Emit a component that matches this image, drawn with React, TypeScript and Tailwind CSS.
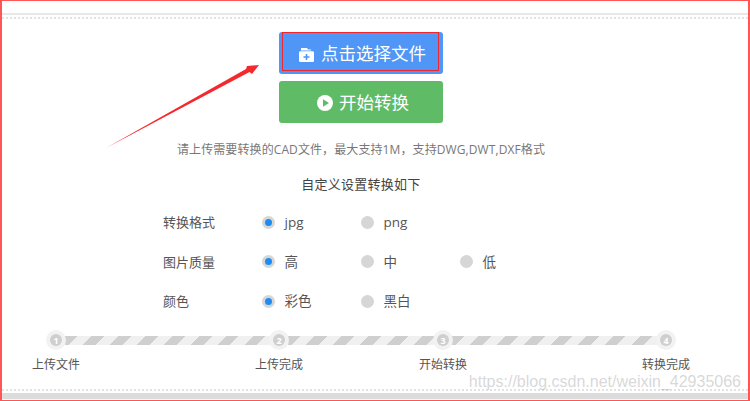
const font = "font-['Open_Sans','Noto_Sans_CJK_SC',sans-serif]"

type Option = { label: string; checked?: boolean }

const rows: { title: string; options: Option[] }[] = [
  { title: "转换格式", options: [{ label: "jpg", checked: true }, { label: "png" }] },
  { title: "图片质量", options: [{ label: "高", checked: true }, { label: "中" }, { label: "低" }] },
  { title: "颜色", options: [{ label: "彩色", checked: true }, { label: "黑白" }] },
]

function Radio({ label, checked }: Option) {
  return (
    <div className="flex w-[99px] items-center">
      <span className="flex h-[13px] w-[13px] items-center justify-center rounded-full bg-[#d6d6d6]">
        {checked && <span className="h-[7px] w-[7px] rounded-full bg-[#1e8cf0]" />}
      </span>
      <span className="ml-[9.5px] text-[13.5px] leading-5 text-[#555]">{label}</span>
    </div>
  )
}

function Step({ n, label }: { n: number; label: string }) {
  return (
    <div className="relative z-10 flex w-16 flex-col items-center">
      <span className="flex h-[20px] w-[20px] items-center justify-center rounded-full bg-[#f2f2f2]">
        <span className="flex h-[12px] w-[12px] items-center justify-center rounded-full bg-[#cfcfcf] text-[9px] font-bold leading-none text-white">
          {n}
        </span>
      </span>
      <span className="mt-[5px] whitespace-nowrap text-[12px] leading-5 text-[#555]">{label}</span>
    </div>
  )
}

function Track({ width }: { width: string }) {
  return (
    <div
      className={`${width} mx-[-23px] mt-[6px] h-[9px] shrink-0 bg-[repeating-linear-gradient(135deg,#cfcfcf_0,#cfcfcf_9px,#f0f0f0_9px,#f0f0f0_19px)]`}
    />
  )
}

export default function App() {
  return (
    <div className={`${font} relative h-[401px] w-[750px] overflow-hidden border-x-2 border-y border-[#f55] bg-white`}>
      <div className="mt-[12px] h-[2px] bg-[#e8e8e8]" />
      <div className="mt-[2px] border-t-2 border-dotted border-[#e2e2e2]" />

      <div className="mt-[13px] flex flex-col items-center pr-[28px]">
        <button className="relative flex h-[42px] w-[164px] items-center justify-center gap-[6px] rounded-[3px] bg-[#4f96f6] pl-[2px] pt-[1px] text-[17.5px] text-white">
          <svg width="17" height="16" viewBox="0 0 17 16" fill="white" className="mt-[3px]">
            <path d="M3 1h6l1 1.500h3V3.500H3z" />
            <path d="M1 5.500a1.200 1.200 0 0 1 1.200-1.200h12.600A1.200 1.200 0 0 1 16 5.500v8.300a1.200 1.200 0 0 1-1.200 1.200H2.200A1.200 1.200 0 0 1 1 13.800z" />
            <path d="M7.700 7h1.600v2.200h2.200v1.600H9.300V13H7.700v-2.200H5.500V9.200h2.200z" fill="#4f96f6" />
          </svg>
          点击选择文件
          <span className="absolute left-[3px] top-0 h-[39px] w-[157px] border-[1.5px] border-[#f0282d]" />
        </button>
        <button className="mt-[7px] flex h-[42px] w-[164px] items-center justify-center gap-[6px] rounded-[3px] bg-[#5fbb66] pl-[4px] text-[17.5px] text-white">
          <svg width="16" height="16" viewBox="0 0 16 16" className="mt-[1px]">
            <circle cx="8" cy="8" r="8" fill="white" />
            <path d="M6 4.200v7.600L12 8z" fill="#5fbb66" />
          </svg>
          开始转换
        </button>
        <p className="mt-[17px] text-[12px] leading-5 tracking-[0.1px] text-[#777]">
          请上传需要转换的CAD文件，最大支持1M，支持DWG,DWT,DXF格式
        </p>
        <p className="mt-[14px] text-[13px] leading-5 tracking-[0.25px] text-[#444]">自定义设置转换如下</p>
      </div>

      <div className="mt-[18px] flex flex-col gap-[19.5px] pl-[161px]">
        {rows.map((row) => (
          <div key={row.title} className="flex items-center">
            <span className="w-[99px] text-[13px] leading-5 text-[#555]">{row.title}</span>
            {row.options.map((o) => (
              <Radio key={o.label} {...o} />
            ))}
          </div>
        ))}
      </div>

      <div className="mt-[19px] flex pl-[22px]">
        <Step n={1} label="上传文件" />
        <Track width="w-[205px]" />
        <Step n={2} label="上传完成" />
        <Track width="w-[146px]" />
        <Step n={3} label="开始转换" />
        <Track width="w-[205px]" />
        <Step n={4} label="转换完成" />
      </div>

      <div className="absolute inset-x-0 bottom-[1px] h-[6px] bg-[#dcdcdc]" />
      <div className="absolute inset-x-0 bottom-[9px] border-t-2 border-dotted border-[#e2e2e2]" />

      <svg className="absolute left-[104px] top-[62px]" width="158" height="86" viewBox="0 0 158 86">
        <path d="M0 85 140 6 141 3 153 2 146 11 143.500 9z" fill="#f5292d" />
      </svg>

      <span className="absolute bottom-[8px] right-[7px] font-['Liberation_Sans',sans-serif] text-[16px] leading-5 text-[#9a9a9a]/40">
        https://blog.csdn.net/weixin_42935066
      </span>
    </div>
  )
}
